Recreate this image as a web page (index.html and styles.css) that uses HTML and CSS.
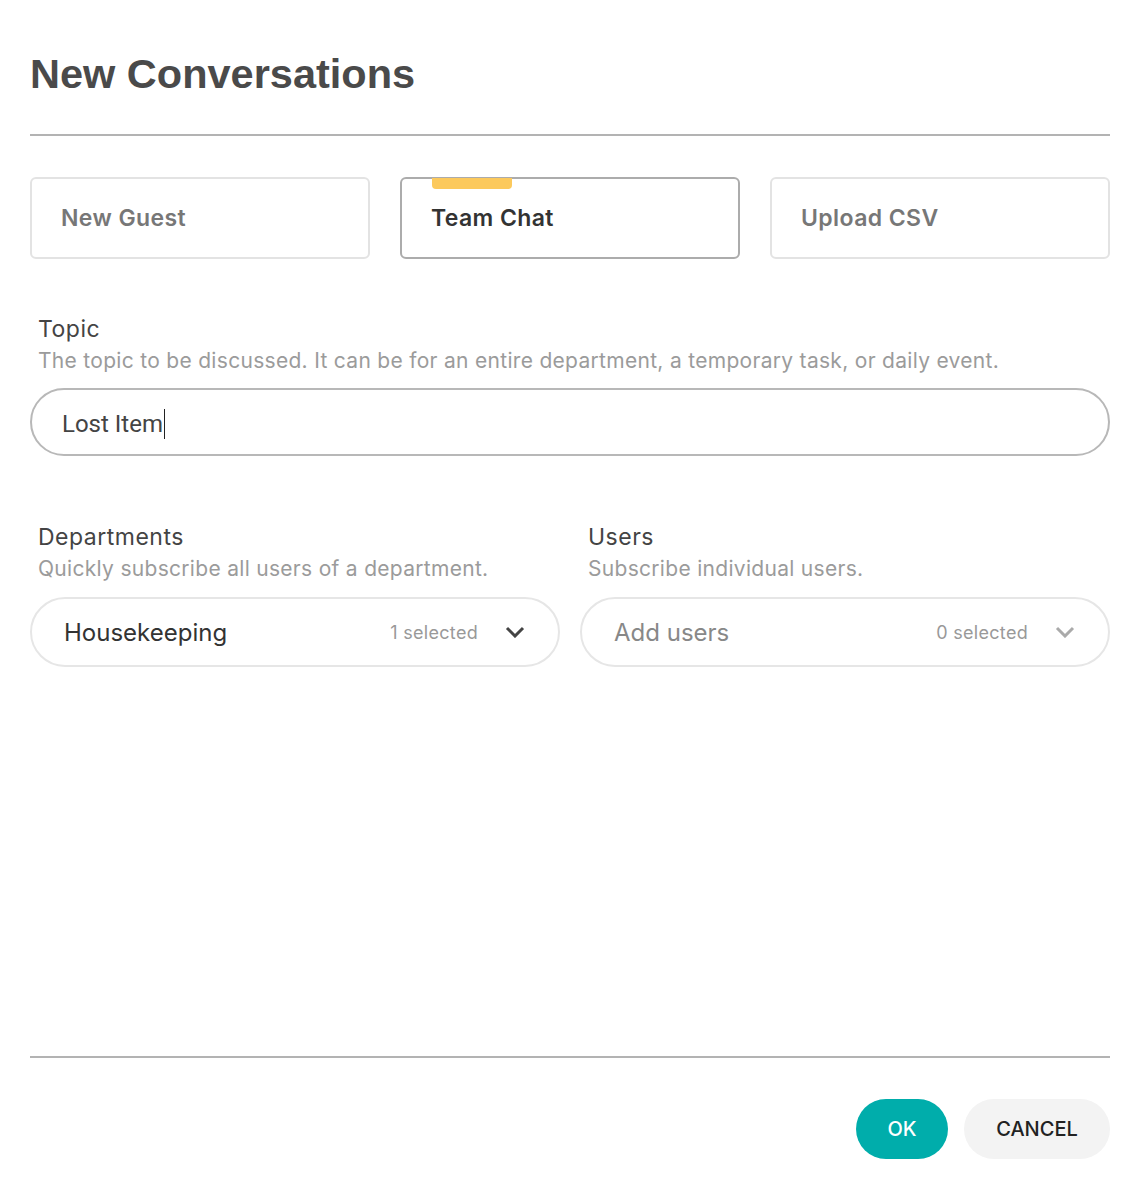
FILE: index.html
```html
<!DOCTYPE html>
<html>
<head>
<meta charset="UTF-8">
<title>New Conversations</title>
<link rel="stylesheet" href="styles.css">
</head>
<body>

<div class="dialog">
  <div class="main">
    <h1 class="title">New Conversations</h1>
    <hr class="rule">

    <div class="tabs">
      <div class="tab">New Guest</div>
      <div class="tab active"><span class="tab-mark"></span>Team Chat</div>
      <div class="tab">Upload CSV</div>
    </div>

    <div class="field">
      <div class="label">Topic</div>
      <div class="hint">The topic to be discussed. It can be for an entire department, a temporary task, or daily event.</div>
      <div class="text-input">Lost Item<span class="caret"></span></div>
    </div>

    <div class="columns">
      <div class="field">
        <div class="label">Departments</div>
        <div class="hint">Quickly subscribe all users of a department.</div>
        <div class="select">
          <span class="select-value">Housekeeping</span>
          <span class="select-count">1 selected</span>
          <svg class="chevron" width="20" height="12" viewBox="0 0 20 12"><polyline points="2,2 10,10 18,2" fill="none" stroke="#444" stroke-width="3"/></svg>
        </div>
      </div>
      <div class="field">
        <div class="label">Users</div>
        <div class="hint">Subscribe individual users.</div>
        <div class="select">
          <span class="select-value empty">Add users</span>
          <span class="select-count">0 selected</span>
          <svg class="chevron" width="20" height="12" viewBox="0 0 20 12"><polyline points="2,2 10,10 18,2" fill="none" stroke="#aaa" stroke-width="3"/></svg>
        </div>
      </div>
    </div>
  </div>

  <div class="footer">
    <hr class="rule">
    <div class="buttons">
      <button class="btn ok">OK</button>
      <button class="btn cancel">CANCEL</button>
    </div>
  </div>
</div>

</body>
</html>
```

FILE: styles.css
```css
body {
  margin: 0;
  background: #fff;
  font-family: Inter, "Noto Sans", sans-serif;
  color: #444;
}

.dialog {
  min-height: 1185px;
  box-sizing: border-box;
  padding: 50px 29px 26px 30px;
  display: flex;
  flex-direction: column;
}

.main {
  flex: 1;
}

.title {
  margin: 0;
  font-family: "Liberation Sans", Arial, sans-serif;
  font-size: 41.5px;
  line-height: 48px;
  font-weight: bold;
  color: #4a4a4a;
}

.rule {
  margin: 36px 0 0 0;
  border: none;
  height: 2px;
  background-color: #b3b3b3;
}

.tabs {
  margin-top: 41px;
  display: flex;
  gap: 30px;
}

.tab {
  position: relative;
  flex: 1;
  height: 82px;
  box-sizing: border-box;
  border: 2px solid #e3e3e3;
  border-radius: 6px;
  padding-left: 29px;
  display: flex;
  align-items: center;
  font-size: 23px;
  letter-spacing: 0.4px;
  font-weight: 600;
  color: #777;
}

.tab.active {
  border-color: #acacac;
  color: #333;
}

.tab-mark {
  position: absolute;
  top: -1px;
  left: 30px;
  width: 80px;
  height: 11px;
  background-color: #fcc95c;
  border-radius: 0 0 4px 4px;
}

.columns {
  margin-top: 68px;
  display: flex;
  gap: 20px;
}

.columns .field {
  flex: 1;
  margin-top: 0;
}

.field {
  margin-top: 57px;
}

.label {
  padding-left: 8px;
  font-size: 23px;
  letter-spacing: 0.5px;
  line-height: 26px;
  color: #444;
}

.hint {
  margin-top: 6px;
  padding-left: 8px;
  font-size: 21px;
  letter-spacing: 0.3px;
  line-height: 26px;
  color: #9b9b9b;
}

.text-input {
  margin-top: 14px;
  height: 68px;
  box-sizing: border-box;
  border: 2px solid #b8b8b8;
  border-radius: 34px;
  padding: 3px 0 0 30px;
  display: flex;
  align-items: center;
  font-family: Roboto, sans-serif;
  font-size: 24px;
  color: #444;
}

.caret {
  display: inline-block;
  width: 1.5px;
  height: 30px;
  margin-left: 1px;
  background-color: #222;
}

.select {
  margin-top: 15px;
  height: 70px;
  box-sizing: border-box;
  border: 2px solid #e6e6e6;
  border-radius: 35px;
  padding: 0 33px 0 32px;
  display: flex;
  align-items: center;
}

.select-value {
  flex: 1;
  font-size: 24px;
  color: #333;
}

.select-value.empty {
  color: #888;
}

.select-count {
  font-size: 18px;
  letter-spacing: 0.3px;
  color: #999;
  margin-right: 27px;
}

.chevron {
  display: block;
}

.footer .rule {
  margin-top: 0;
}

.buttons {
  margin-top: 41px;
  display: flex;
  justify-content: flex-end;
  gap: 16px;
}

.btn {
  height: 60px;
  border: none;
  border-radius: 30px;
  font-family: Inter, sans-serif;
  font-size: 20px;
  font-weight: 500;
  cursor: pointer;
}

.ok {
  width: 92px;
  background-color: #00adab;
  color: #fff;
}

.cancel {
  width: 146px;
  background-color: #f3f3f3;
  color: #222;
}
```
